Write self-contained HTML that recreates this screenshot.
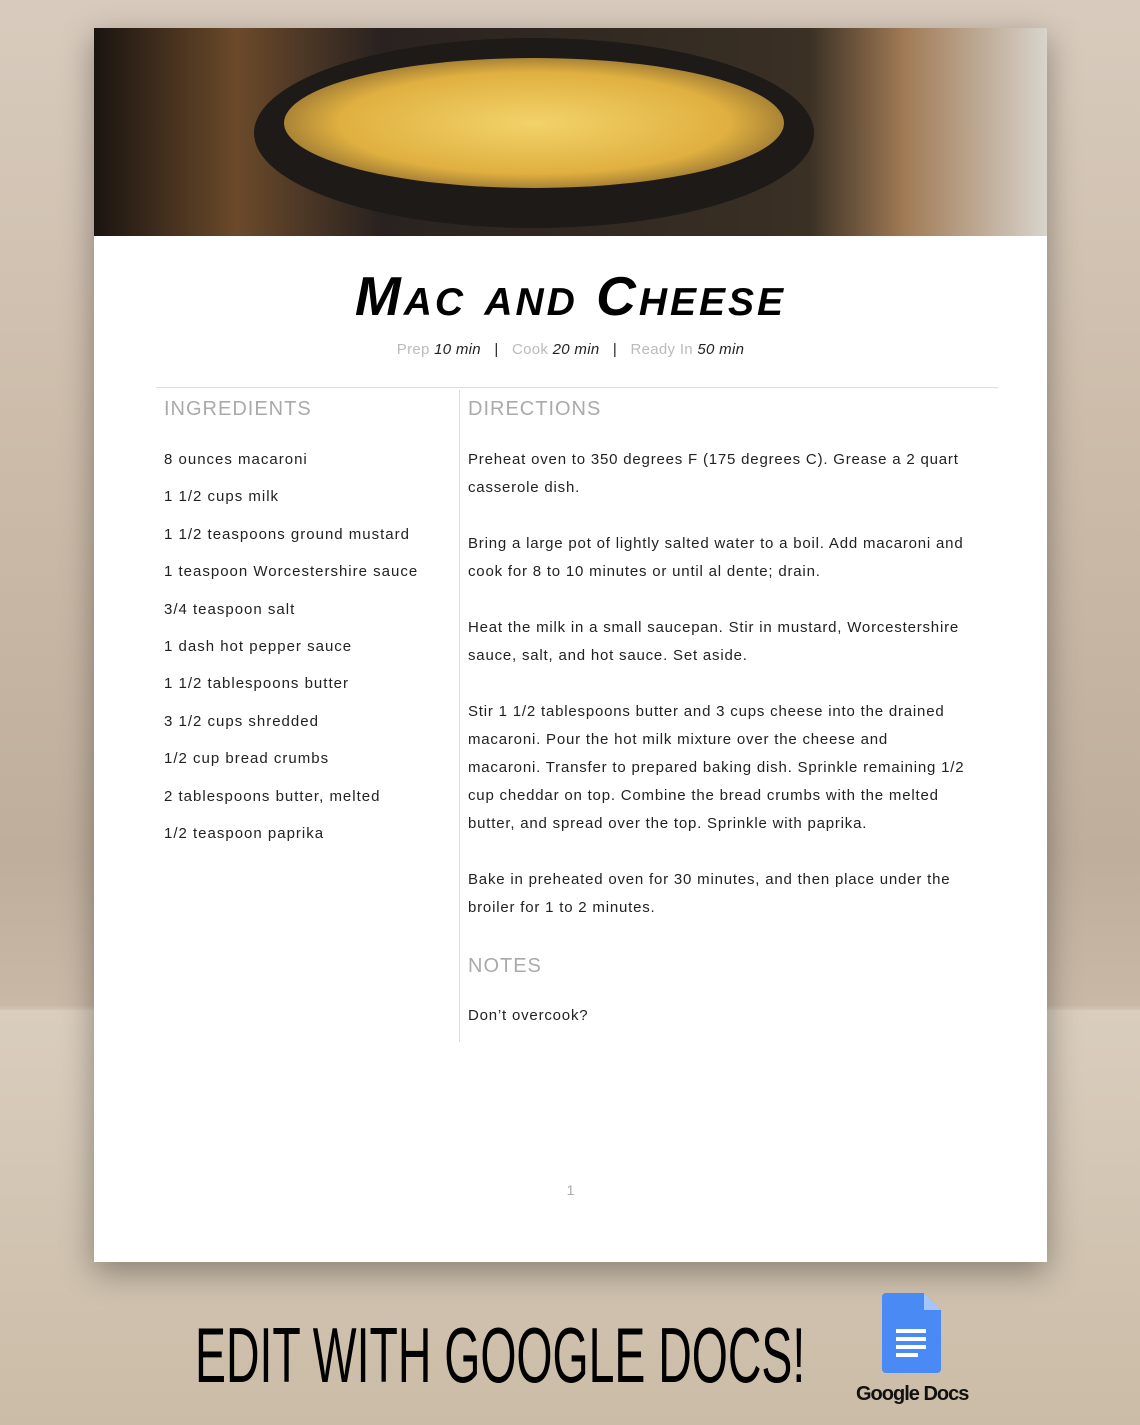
<!DOCTYPE html>
<html><head><style>
body{margin:0;width:1140px;height:1425px;position:relative;overflow:hidden;font-family:"Liberation Sans",sans-serif;
background:linear-gradient(180deg,#d8cbbd 0%,#cdbcaa 30%,#bfae9c 60%,#c9b8a6 70.5%,#d6c9b8 71%,#c9b9a5 100%);}
.wood{position:absolute;left:0;top:1010px;width:1140px;height:415px;background:linear-gradient(180deg,#d9cdbd,#cbbca7);}
.paper{position:absolute;left:94px;top:28px;width:953px;height:1234px;background:#fff;box-shadow:0 10px 30px rgba(0,0,0,.35);}
.photo{position:absolute;left:0;top:0;width:953px;height:208px;background:linear-gradient(90deg,#1a1410 0%,#6b4a2a 15%,#2a2220 30%,#3a3024 75%,#a07a55 85%,#d8d4cc 100%);overflow:hidden}
.cheese{position:absolute;left:190px;top:30px;width:500px;height:130px;border-radius:50%;background:radial-gradient(ellipse,#f2d36a 0%,#e0b040 55%,#8a6a30 80%,#1e1814 100%);}
.pan{position:absolute;left:160px;top:10px;width:560px;height:190px;border-radius:50%;background:#1d1a18;}
h1{position:absolute;left:0;width:953px;top:236px;margin:0;text-align:center;font:italic 900 55px "Liberation Sans",sans-serif;letter-spacing:3px;font-variant:small-caps;}
.meta{position:absolute;top:313px;width:953px;text-align:center;font-size:15px;color:#222;letter-spacing:.3px}
.meta .g{color:#bbb}.meta i{color:#222}
.hr{position:absolute;left:62px;top:359px;width:842px;height:1px;background:#ddd}
.vr{position:absolute;left:365px;top:362px;width:1px;height:652px;background:#ddd}
.hd{position:absolute;font-size:20px;color:#aaa;letter-spacing:1px}
.ing{position:absolute;left:70px;top:413px;font-size:15px;color:#222;line-height:37.4px;letter-spacing:1px}
.dir{position:absolute;left:374px;top:418px;width:570px;font-size:15px;color:#222;line-height:28px;letter-spacing:.8px;white-space:nowrap}
.dir p{margin:0 0 28px}
.pg{position:absolute;top:1154px;width:953px;text-align:center;color:#aaa;font-size:14px}
.edit{position:absolute;left:195px;top:1310px;font:400 78px "Liberation Sans Narrow","Liberation Sans",sans-serif;transform:scaleX(.595);transform-origin:left;color:#000;white-space:nowrap}
</style></head><body>
<div class="wood"></div>
<div class="paper">
<div class="photo"><div class="pan"></div><div class="cheese"></div></div>
<h1>Mac and Cheese</h1>
<div class="meta"><span class="g">Prep</span> <i>10 min</i> &nbsp; | &nbsp; <span class="g">Cook</span> <i>20 min</i> &nbsp; | &nbsp; <span class="g">Ready In</span> <i>50 min</i></div>
<div class="hr"></div><div class="vr"></div>
<div class="hd" style="left:70px;top:370px">INGREDIENTS</div>
<div class="hd" style="left:374px;top:370px">DIRECTIONS</div>
<div class="ing">8 ounces macaroni<br>1 1/2 cups milk<br>1 1/2 teaspoons ground mustard<br>1 teaspoon Worcestershire sauce<br>3/4 teaspoon salt<br>1 dash hot pepper sauce<br>1 1/2 tablespoons butter<br>3 1/2 cups shredded<br>1/2 cup bread crumbs<br>2 tablespoons butter, melted<br>1/2 teaspoon paprika</div>
<div class="dir">
<p>Preheat oven to 350 degrees F (175 degrees C). Grease a 2 quart<br>casserole dish.</p>
<p>Bring a large pot of lightly salted water to a boil. Add macaroni and<br>cook for 8 to 10 minutes or until al dente; drain.</p>
<p>Heat the milk in a small saucepan. Stir in mustard, Worcestershire<br>sauce, salt, and hot sauce. Set aside.</p>
<p>Stir 1 1/2 tablespoons butter and 3 cups cheese into the drained<br>macaroni. Pour the hot milk mixture over the cheese and<br>macaroni. Transfer to prepared baking dish. Sprinkle remaining 1/2<br>cup cheddar on top. Combine the bread crumbs with the melted<br>butter, and spread over the top. Sprinkle with paprika.</p>
<p>Bake in preheated oven for 30 minutes, and then place under the<br>broiler for 1 to 2 minutes.</p>
</div>
<div class="hd" style="left:374px;top:927px">NOTES</div>
<div class="dir" style="top:974px">Don’t overcook?</div>
<div class="pg">1</div>
</div>
<div class="edit">EDIT WITH GOOGLE DOCS!</div>
<svg style="position:absolute;left:882px;top:1293px" width="60" height="80" viewBox="0 0 60 80">
<path d="M4 0H42L59 17V76a4 4 0 0 1-4 4H4a4 4 0 0 1-4-4V4a4 4 0 0 1 4-4z" fill="#4a8af4"/>
<path d="M42 0V17H59z" fill="#a6c5fa"/>
<rect x="14" y="36" width="30" height="4" fill="#fff"/><rect x="14" y="44" width="30" height="4" fill="#fff"/><rect x="14" y="52" width="30" height="4" fill="#fff"/><rect x="14" y="60" width="22" height="4" fill="#fff"/>
</svg>
<div style="position:absolute;left:856px;top:1383px;font-size:20px;font-weight:bold;letter-spacing:-1px;color:#111">Google Docs</div>
</body></html>
